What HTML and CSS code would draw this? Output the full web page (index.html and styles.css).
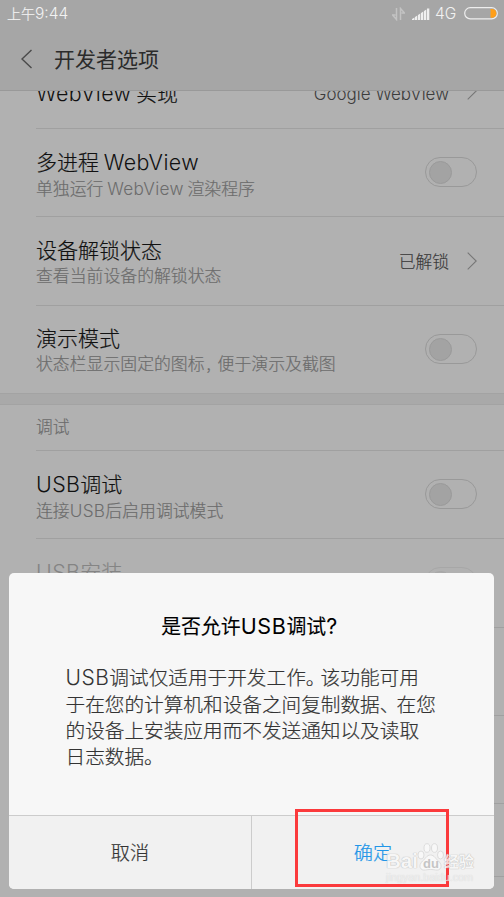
FILE: index.html
```
<!DOCTYPE html>
<html lang="zh-CN">
<head>
<meta charset="utf-8">
<title>开发者选项</title>
<link rel="stylesheet" href="styles.css">
</head>
<body>
<div class="screen">
  <header class="header">
    <div class="status">
      <span class="time">上午<span class="clock">9:44</span></span>
      <div class="indicators">
        <svg class="data" width="13" height="14" viewBox="0 0 13 14"><path d="M4.500 1v11.500L.5 8h3M8.500 13V1.500l4 4.500h-3" fill="none" stroke="#c3c3c3" stroke-width="1.500"/></svg>
        <svg class="signal" width="18" height="12" viewBox="0 0 18 12"><path d="M0 12v-1l2.500-1.500V12zM3 12V9l2.300-1.500V12zM6 12V7l2.300-1.500V12zM9 12V5l2.300-1.500V12zM12 12V3l2.300-1.500V12zM15 12V.5h2.300V12z" fill="#efefef"/></svg>
        <span class="network">4G</span>
        <svg class="battery" width="34" height="13" viewBox="0 0 34 13"><rect x=".7" y=".7" width="32.6" height="11.2" rx="5.6" fill="none" stroke="#eee" stroke-width="1.2"/><path d="M26.5 2H28a4.4 4.4 0 0 1 0 8.8h-1.5z" fill="#ff9f19"/></svg>
      </div>
    </div>
    <div class="nav">
      <svg class="back" width="12" height="20" viewBox="0 0 12 20"><path d="M10.5 1L1 10l9.500 9" fill="none" stroke="#4a4a4a" stroke-width="1.4"/></svg>
      <h1 class="heading">开发者选项</h1>
    </div>
  </header>
  <main class="list">
    <div class="row row-scrolled">
      <div class="title"><span class="latin">WebView</span> 实现</div>
      <div class="value"><span class="latin">Google WebView</span></div>
      <svg class="chevron" width="10" height="18" viewBox="0 0 10 18"><path d="M.7 .7L9.200 9 .7 17.300" fill="none" stroke="#777" stroke-width="1.100"/></svg>
    </div>
    <div class="row">
      <div class="text"><div class="title">多进程 <span class="latin">WebView</span></div><div class="sub">单独运行 <span class="latin">WebView</span> 渲染程序</div></div>
      <span class="toggle"></span>
    </div>
    <div class="row">
      <div class="text"><div class="title">设备解锁状态</div><div class="sub">查看当前设备的解锁状态</div></div>
      <div class="value">已解锁</div>
      <svg class="chevron" width="10" height="18" viewBox="0 0 10 18"><path d="M.7 .7L9.200 9 .7 17.300" fill="none" stroke="#777" stroke-width="1.100"/></svg>
    </div>
    <div class="row row-last">
      <div class="text"><div class="title">演示模式</div><div class="sub">状态栏显示固定的图标<span class="comma">,</span>便于演示及截图</div></div>
      <span class="toggle"></span>
    </div>
    <div class="gap"></div>
    <div class="section">调试</div>
    <div class="row">
      <div class="text"><div class="title"><span class="latin">USB</span>调试</div><div class="sub">连接<span class="latin">USB</span>后启用调试模式</div></div>
      <span class="toggle"></span>
    </div>
    <div class="row row-disabled">
      <div class="text"><div class="title"><span class="latin">USB</span>安装</div></div>
      <span class="toggle"></span>
    </div>
    <div class="row"></div>
    <div class="row"></div>
    <div class="row row-short"></div>
  </main>
  <section class="dialog">
    <h2 class="dialog-title">是否允许<span class="latin">USB</span>调试<span class="latin">?</span></h2>
    <p class="message"><span class="latin">USB</span>调试仅适用于开发工作<span class="stop">。</span>该功能可用<br>于在您的计算机和设备之间复制数据<span class="pause">、</span>在您<br>的设备上安装应用而不发送通知以及读取<br>日志数据<span class="stop">。</span></p>
    <div class="actions"><div class="action">取消</div><div class="action confirm">确定</div></div>
  </section>
  <div class="highlight"></div>
  <div class="watermark">
    <div class="brand"><span class="bai">Bai</span><svg class="paw" width="27" height="30" viewBox="0 0 27 30"><g fill="#fafafa" stroke="#d0d0d0" stroke-width=".8"><ellipse cx="4" cy="13" rx="3" ry="4"/><ellipse cx="10" cy="6" rx="3" ry="4.300"/><ellipse cx="17.500" cy="6" rx="3" ry="4.300"/><ellipse cx="23.500" cy="13" rx="3" ry="4"/><path d="M13.500 13c4 0 5 4 8 6 5 5 2 10-3 9-3-.7-7-.7-10 0-5 1-8-4-3-9 3-2 4-6 8-6z"/></g><text class="du" x="6" y="26">du</text></svg><span class="jing">经验</span></div>
    <div class="site">jingyan.baidu.com</div>
  </div>
</div>
</body>
</html>
```
FILE: styles.css
```
* { box-sizing: border-box; }
body { margin: 0; }
.screen {
  position: relative;
  display: flex;
  flex-direction: column;
  width: 504px;
  height: 897px;
  overflow: hidden;
  background: #b1b1b1;
  font-family: "Noto Sans CJK SC", sans-serif;
  font-weight: 300;
  white-space: nowrap;
  -webkit-text-stroke: 0.2px currentColor;
}
.latin, .clock, .network { font-family: Inter, "Liberation Sans", sans-serif; font-weight: 300; letter-spacing: 0; -webkit-text-stroke: 0; }
.latin { font-size: 1.020em; letter-spacing: 0.018em; }
.header { position: relative; z-index: 1; flex: none; height: 91px; background: #a6a6a6; border-bottom: 1px solid #999; }
.status { display: flex; justify-content: space-between; align-items: center; height: 27px; padding: 0 6px 0 7px; color: #f2f2f2; }
.time { margin-top: -2px; font-size: 14px; }
.clock { font-size: 15.500px; }
.indicators { display: flex; align-items: center; }
.signal { margin-left: 7px; }
.network { margin-left: 5px; width: 23px; font-size: 15.500px; }
.battery { margin-left: 6px; }
.nav { display: flex; align-items: center; height: 63px; padding-left: 21px; }
.heading { margin: -1px 0 0 21px; font-size: 21px; font-weight: 400; color: #2b2b2b; -webkit-text-stroke: 0; }
.list { flex: 1; margin-top: -33px; }
.row {
  display: flex;
  align-items: center;
  height: 88.300px;
  margin-left: 36px;
  padding-right: 27px;
  border-bottom: 1px solid #a0a0a0;
}
.row-scrolled { height: 71px; }
.row-scrolled .title, .row-scrolled .value { margin-top: -1px; }
.row-scrolled .chevron { margin-top: -4px; }
.row-last { border-bottom: 0; height: 87.400px; }
.row-short { height: 73px; }
.text { align-self: flex-start; padding-top: 19.600px; }
.title { font-size: 21px; line-height: 25px; color: #111; }
.sub { font-size: 16.860px; line-height: 25px; color: #6c6c6c; }
.value { margin-left: auto; font-size: 16.800px; color: #3c3c3c; }
.value .latin { font-size: 17px; letter-spacing: 0; }
.chevron { margin-left: 18px; }
.toggle { flex: none; width: 52px; height: 30px; margin: -1px 0 0 auto; padding: 3px; border: 1px solid #999; border-radius: 15px; }
.toggle::before { content: ""; display: block; width: 21px; height: 21px; border: 1px solid #9a9a9a; border-radius: 50%; background: #a3a3a3; }
.row-disabled .title { color: #848484; }
.row-disabled .toggle { opacity: .4; }
.comma { display: inline-block; width: 13px; padding-left: 2px; }
.stop, .pause { font-feature-settings: "halt"; }
.stop { margin-right: 5px; }
.pause { margin-right: 7px; }
.gap { height: 12px; border: solid #a3a3a3; border-width: 1px 0; background: #a9a9a9; }
.section { height: 46px; margin-left: 36px; border-bottom: 1px solid #a0a0a0; font-size: 16.700px; line-height: 43px; color: #6c6c6c; }
.dialog {
  position: absolute;
  left: 9px;
  top: 573px;
  z-index: 2;
  display: flex;
  flex-direction: column;
  width: 485px;
  height: 316px;
  overflow: hidden;
  border-radius: 5px;
  background: #f7f7f7;
}
.dialog-title { margin: 39px 0 0 -4px; text-align: center; font-size: 19.900px; line-height: 28px; font-weight: 400; color: #000; -webkit-text-stroke: 0.100px currentColor; }
.dialog-title .latin { font-weight: 400; font-size: 21.500px; letter-spacing: 0.600px; -webkit-text-stroke: 0; }
.message { margin: 23.500px 0 0 56.500px; font-size: 19.650px; line-height: 26.200px; color: #333; }
.message .latin { font-size: 21px; letter-spacing: 0.500px; }
.actions { display: flex; height: 74px; margin-top: auto; border-top: 1px solid #ccc; background: #f1f1f1; }
.action { flex: 1; font-size: 19.200px; line-height: 73px; text-align: center; color: #333; }
.confirm { border-left: 1px solid #ccc; color: #2196e8; }
.highlight { position: absolute; left: 295px; top: 809px; z-index: 4; width: 154px; height: 78px; border: 3px solid #fb3a3c; }
.watermark { position: absolute; left: 386px; top: 841px; z-index: 5; opacity: .8; color: #f8f8f8; font-family: "Liberation Sans", "Noto Sans CJK SC", sans-serif; text-shadow: 0 0 1px #aaa, 0 0 1px #bbb; -webkit-text-stroke: 0; }
.brand { display: flex; align-items: flex-end; height: 31px; font-size: 20.500px; font-weight: 700; line-height: 22px; }
.bai { width: 31px; }
.du { fill: #bbb; font-size: 13px; font-weight: 700; text-shadow: none; }
.jing { font-family: "Noto Sans CJK SC", sans-serif; font-size: 15px; font-weight: 700; }
.site { margin-top: -1px; font-size: 10.800px; line-height: 12px; color: #eee; text-shadow: 0 0 1px #ccc; }
```
